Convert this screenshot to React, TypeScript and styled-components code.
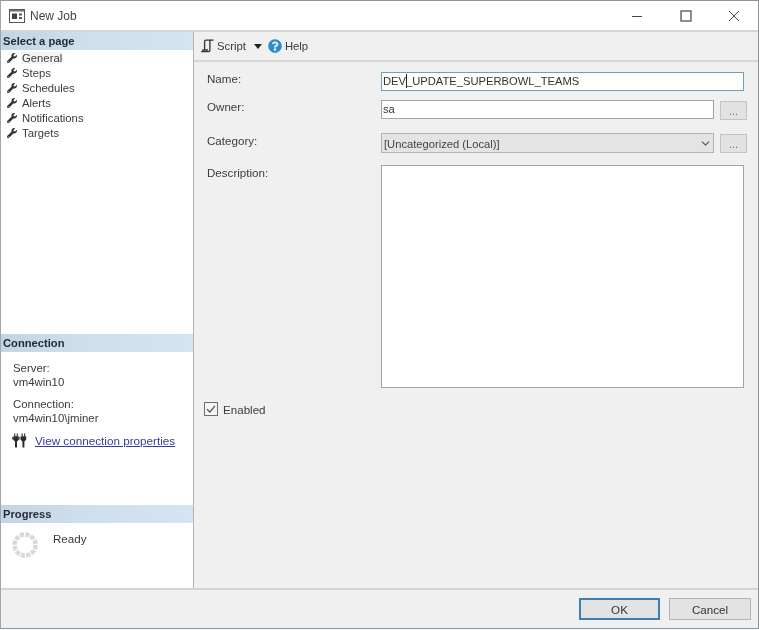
import React from "react";
import styled, { createGlobalStyle } from "styled-components";
import { FaWrench, FaQuestionCircle } from "react-icons/fa";
import { ChevronDown } from "lucide-react";

const Global = createGlobalStyle`
  html, body { margin: 0; padding: 0; background: #fff; }
  body { font-family: "Liberation Sans", Arial, sans-serif; font-size: 11.6px; color: #333; }
`;

const Frame = styled.div`
  width: 759px;
  height: 629px;
  box-sizing: border-box;
  border: 1px solid #8d9499;
  border-left-color: #a6a6a6;
  display: flex;
  flex-direction: column;
  background: #f0f0f0;
  overflow: hidden;
  filter: blur(0.4px);
`;

const TitleBar = styled.div`
  height: 31px;
  flex: none;
  box-sizing: border-box;
  background: #fff;
  border-bottom: 2px solid #d4d4d4;
  display: flex;
  align-items: center;
  padding-left: 8px;
  gap: 5px;
`;

const TitleText = styled.span`
  font-size: 12px;
  color: #444;
  flex: 1;
`;

const WindowControls = styled.div`
  display: flex;
  align-items: center;
  gap: 36px;
  padding-right: 18px;
`;

const Body = styled.div`
  flex: 1;
  display: flex;
  min-height: 0;
`;

const Sidebar = styled.div`
  width: 192px;
  flex: none;
  display: flex;
  flex-direction: column;
  background: #fff;
  border-right: 1px solid #b4b4b4;
`;

const Section = styled.section<{ $height?: number }>`
  ${(p) => (p.$height ? `height: ${p.$height}px; flex: none;` : "flex: 1;")}
  min-height: 0;
`;

const SectionHeader = styled.div`
  height: 18px;
  background: linear-gradient(90deg, #c3d4e4 0%, #d0dfec 45%, #d6e4f1 100%);
  font-weight: 700;
  font-size: 11.2px;
  line-height: 18px;
  color: #1f2a33;
  padding-left: 2px;
`;

const PageList = styled.ul`
  list-style: none;
  margin: 0;
  padding: 0 0 0 6px;
`;

const PageItem = styled.li`
  height: 15px;
  display: flex;
  align-items: center;
  gap: 4px;
  color: #3c3c3c;
  font-size: 11.3px;
  svg { color: #333; flex: none; }
`;

const PageLabel = styled.span<{ $active?: boolean }>`
  padding: 0 1px;
  background: ${(p) => (p.$active ? "#f4f4f4" : "transparent")};
`;

const ConnectionBody = styled.div`
  padding: 10px 0 0 12px;
  line-height: 13.6px;
  font-size: 11.4px;
  color: #3a3a3a;
`;

const InfoBlock = styled.div`
  margin-bottom: 9px;
`;

const LinkRow = styled.div`
  display: flex;
  align-items: center;
  gap: 8px;
  margin: -1px 0 0 -1px;
`;

const PropsLink = styled.a`
  color: #3a3a9a;
  text-decoration: underline;
  font-size: 11.7px;
`;

const ProgressBody = styled.div`
  display: flex;
  gap: 15px;
  padding: 9px 0 0 11px;
`;

const ReadyText = styled.span`
  color: #3a3a3a;
  line-height: 14px;
`;

const Main = styled.div`
  flex: 1;
  display: flex;
  flex-direction: column;
  min-width: 0;
`;

const Toolbar = styled.div`
  height: 30px;
  flex: none;
  box-sizing: border-box;
  border-bottom: 2px solid #d6d6d6;
  display: flex;
  align-items: center;
  padding-left: 7px;
  color: #3a3a3a;
  font-size: 11.3px;
`;

const ToolLabel = styled.span`
  margin-left: 3px;
`;

const Caret = styled.span`
  width: 0;
  height: 0;
  border-left: 4.5px solid transparent;
  border-right: 4.5px solid transparent;
  border-top: 5px solid #222;
  margin: 1px 6px 0 8px;
`;

const Form = styled.div`
  flex: 1;
  padding: 10px 0 0 13px;
  display: flex;
  flex-direction: column;
  min-height: 0;
`;

const FieldRow = styled.div<{ $top?: number }>`
  display: flex;
  align-items: flex-start;
  margin-top: ${(p) => p.$top ?? 0}px;
`;

const FieldLabel = styled.label<{ $nudge?: number }>`
  width: 174px;
  flex: none;
  font-size: 11.6px;
  color: #3c3c3c;
  line-height: 14px;
  padding-top: ${(p) => p.$nudge ?? 0}px;
`;

const TextBox = styled.div<{ $focused?: boolean }>`
  width: ${(p) => (p.$focused ? 363 : 333)}px;
  height: 19px;
  box-sizing: border-box;
  border: 1px solid ${(p) => (p.$focused ? "#6f9fbd" : "#a4a4a4")};
  background: ${(p) => (p.$focused ? "#fffffa" : "#fff")};
  padding-left: 1px;
  line-height: 17px;
  font-size: 11.2px;
  color: #333;
  white-space: nowrap;
`;

const TextCaret = styled.span`
  display: inline-block;
  width: 1px;
  height: 14px;
  background: #222;
  vertical-align: -3px;
  margin-right: -1px;
`;

const ComboBox = styled.div`
  width: 333px;
  height: 20px;
  box-sizing: border-box;
  border: 1px solid #b4b4b4;
  background: #e4e4e4;
  display: flex;
  align-items: center;
  justify-content: space-between;
  padding: 1px 1px 0 2px;
  font-size: 11.2px;
  color: #444;
`;

const DotsButton = styled.button`
  width: 27px;
  height: 19px;
  margin: 1px 0 0 6px;
  box-sizing: border-box;
  border: 1px solid #c4c4c4;
  background: #e2e2e2;
  color: #777;
  font: 11px "Liberation Sans", Arial, sans-serif;
  line-height: 14px;
  padding: 0;
`;

const DescriptionBox = styled.div`
  width: 363px;
  height: 223px;
  box-sizing: border-box;
  border: 1px solid #a4a4a4;
  background: #fff;
`;

const EnabledRow = styled.div`
  display: flex;
  align-items: center;
  gap: 5px;
  margin: 14px 0 0 -3px;
  color: #3c3c3c;
`;

const CheckBox = styled.span`
  width: 14px;
  height: 14px;
  box-sizing: border-box;
  border: 1px solid #6e6e6e;
  background: #f6f6f6;
  display: flex;
  align-items: center;
  justify-content: center;
`;

const Footer = styled.div`
  height: 40px;
  flex: none;
  box-sizing: border-box;
  border-top: 2px solid #d4d4d4;
  display: flex;
  justify-content: flex-end;
  align-items: flex-start;
  gap: 9px;
  padding: 8px 7px 0 0;
`;

const DialogButton = styled.button<{ $primary?: boolean }>`
  width: ${(p) => (p.$primary ? 81 : 82)}px;
  height: 22px;
  box-sizing: border-box;
  border: ${(p) => (p.$primary ? "2px solid #3b80ae" : "1px solid #b4b4b4")};
  background: #e3e3e3;
  color: #333;
  font: 11.6px "Liberation Sans", Arial, sans-serif;
  padding: 0;
`;

const Spinner = () => (
  <svg width="26" height="26" viewBox="0 0 26 26">
    <circle cx="13" cy="13" r="10.5" fill="none" stroke="#d8d8d8" strokeWidth="4.4" strokeDasharray="4.2 1.3" />
  </svg>
);

const JobIcon = () => (
  <svg width="16" height="14" viewBox="0 0 16 14">
    <rect x="0.5" y="0.5" width="15" height="13" fill="#fff" stroke="#555" />
    <rect x="1" y="1" width="14" height="1.6" fill="#777" />
    <rect x="3" y="4.5" width="5" height="5.5" fill="#444" />
    <rect x="10" y="4.5" width="3" height="2" fill="#555" />
    <rect x="10" y="8" width="3" height="2" fill="#555" />
  </svg>
);

const ScriptIcon = () => (
  <svg width="13" height="14" viewBox="0 0 13 14" fill="none" stroke="#333" strokeWidth="1.3">
    <path d="M3.6 10.5V2.6C3.6 1.7 4.2 1.2 5 1.2H12.6" />
    <path d="M9.8 1.2C9.1 1.5 8.9 2 8.9 2.8V10.8C8.9 12 8.2 12.7 7 12.7H0.4C1.5 12.5 1.9 11.9 2 11H7" />
  </svg>
);

const PlugIcon = () => (
  <svg width="15" height="15" viewBox="0 0 15 15" fill="#2c2c2c">
    <path d="M2.2 0.5h1.1v3H2.2zM4.7 0.5h1.1v3H4.7zM9.6 0.5h1.1v3H9.6zM12.1 0.5h1.1v3h-1.1z" />
    <path d="M1.2 3.3h5.6v3.4L5 8.6V14.5H3V8.6L1.2 6.7z" />
    <path d="M8.6 3.3h5.6v3.4l-1.8 1.9V14.5h-2V8.6L8.6 6.7z" />
    <path d="M0 4h.8v2.4H0zM7.3 4h.8v2.4h-.8z" />
  </svg>
);

const pages = ["General", "Steps", "Schedules", "Alerts", "Notifications", "Targets"];

export default function App() {
  return (
    <>
      <Global />
      <Frame>
        <TitleBar>
          <JobIcon />
          <TitleText>New Job</TitleText>
          <WindowControls>
            <svg width="12" height="12" viewBox="0 0 12 12" stroke="#444" fill="none" style={{ marginRight: 1 }}><path d="M1 6.5h10" /></svg>
            <svg width="12" height="12" viewBox="0 0 12 12" stroke="#444" fill="none"><rect x="1" y="1" width="10" height="10" strokeWidth="1.2" /></svg>
            <svg width="12" height="12" viewBox="0 0 12 12" stroke="#444" fill="none"><path d="M1 1l10 10M11 1L1 11" /></svg>
          </WindowControls>
        </TitleBar>
        <Body>
          <Sidebar>
            <Section>
              <SectionHeader>Select a page</SectionHeader>
              <PageList>
                {pages.map((p, i) => (
                  <PageItem key={p}>
                    <FaWrench size={10} />
                    <PageLabel $active={i === 0}>{p}</PageLabel>
                  </PageItem>
                ))}
              </PageList>
            </Section>
            <Section $height={171}>
              <SectionHeader>Connection</SectionHeader>
              <ConnectionBody>
                <InfoBlock>Server:<br />vm4win10</InfoBlock>
                <InfoBlock>Connection:<br />vm4win10\jminer</InfoBlock>
                <LinkRow>
                  <PlugIcon />
                  <PropsLink href="#">View connection properties</PropsLink>
                </LinkRow>
              </ConnectionBody>
            </Section>
            <Section $height={83}>
              <SectionHeader>Progress</SectionHeader>
              <ProgressBody>
                <Spinner />
                <ReadyText>Ready</ReadyText>
              </ProgressBody>
            </Section>
          </Sidebar>
          <Main>
            <Toolbar>
              <ScriptIcon />
              <ToolLabel>Script</ToolLabel>
              <Caret />
              <FaQuestionCircle size={14} color="#2b8ec8" />
              <ToolLabel>Help</ToolLabel>
            </Toolbar>
            <Form>
              <FieldRow>
                <FieldLabel>Name:</FieldLabel>
                <TextBox $focused>DEV<TextCaret />_UPDATE_SUPERBOWL_TEAMS</TextBox>
              </FieldRow>
              <FieldRow $top={9}>
                <FieldLabel>Owner:</FieldLabel>
                <TextBox>sa</TextBox>
                <DotsButton>...</DotsButton>
              </FieldRow>
              <FieldRow $top={13}>
                <FieldLabel $nudge={1}>Category:</FieldLabel>
                <ComboBox>
                  [Uncategorized (Local)]
                  <ChevronDown size={13} color="#555" />
                </ComboBox>
                <DotsButton>...</DotsButton>
              </FieldRow>
              <FieldRow $top={12}>
                <FieldLabel $nudge={1}>Description:</FieldLabel>
                <DescriptionBox />
              </FieldRow>
              <EnabledRow>
                <CheckBox>
                  <svg width="12" height="12" viewBox="0 0 12 12" fill="none" stroke="#444" strokeWidth="1.1"><path d="M2 6.2l2.8 3L10 2.8" /></svg>
                </CheckBox>
                Enabled
              </EnabledRow>
            </Form>
          </Main>
        </Body>
        <Footer>
          <DialogButton $primary>OK</DialogButton>
          <DialogButton>Cancel</DialogButton>
        </Footer>
      </Frame>
    </>
  );
}
